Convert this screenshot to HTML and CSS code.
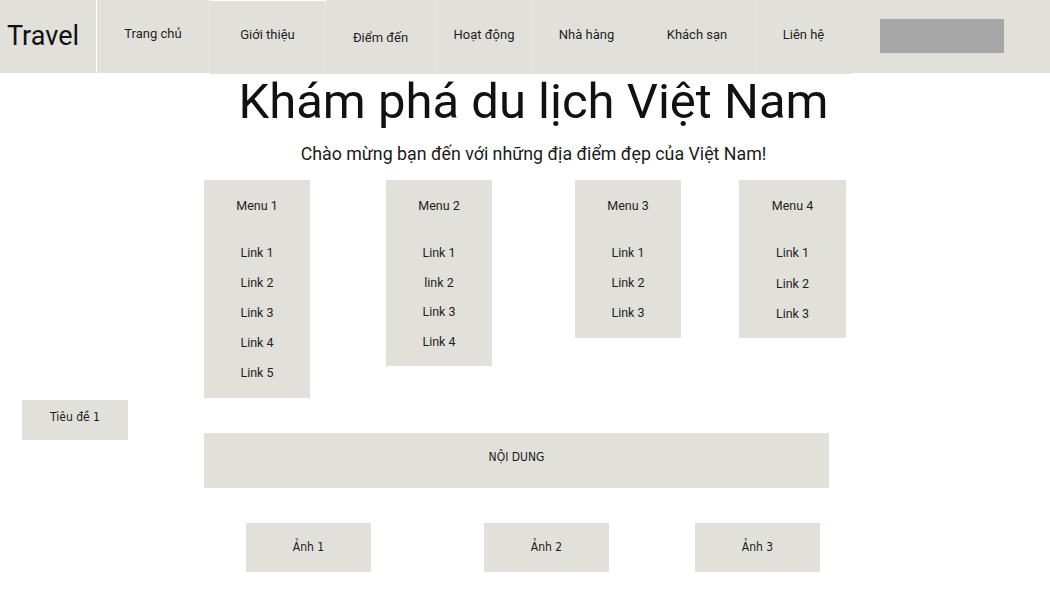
FILE: index.html
```html
<!DOCTYPE html>
<html lang="vi">
<head>
<meta charset="utf-8">
<title>Travel</title>
<link rel="stylesheet" href="styles.css">
</head>
<body>
<nav class="nav">
  <div class="nav-item brand">Travel</div>
  <div class="nav-item w-home">Trang chủ</div>
  <div class="nav-item w-about shift">Giới thiệu</div>
  <div class="nav-item w-dest low">Điểm đến</div>
  <div class="nav-item w-act">Hoạt động</div>
  <div class="nav-item w-rest">Nhà hàng</div>
  <div class="nav-item w-hotel">Khách sạn</div>
  <div class="nav-item w-contact">Liên hệ</div>
  <div class="nav-item search-cell"><div class="search"></div></div>
</nav>

<header class="hero">
  <h1 class="title">Khám phá du lịch Việt Nam</h1>
  <p class="subtitle">Chào mừng bạn đến với những địa điểm đẹp của Việt Nam!</p>
</header>

<section class="menus">
  <div class="menu m1">
    <div class="menu-head">Menu 1</div>
    <div class="menu-link">Link 1</div>
    <div class="menu-link">Link 2</div>
    <div class="menu-link">Link 3</div>
    <div class="menu-link">Link 4</div>
    <div class="menu-link">Link 5</div>
  </div>
  <div class="menu m2 tight">
    <div class="menu-head">Menu 2</div>
    <div class="menu-link">Link 1</div>
    <div class="menu-link">link 2</div>
    <div class="menu-link">Link 3</div>
    <div class="menu-link">Link 4</div>
  </div>
  <div class="menu m3">
    <div class="menu-head">Menu 3</div>
    <div class="menu-link">Link 1</div>
    <div class="menu-link">Link 2</div>
    <div class="menu-link">Link 3</div>
  </div>
  <div class="menu m4">
    <div class="menu-head">Menu 4</div>
    <div class="menu-link">Link 1</div>
    <div class="menu-link">Link 2</div>
    <div class="menu-link">Link 3</div>
  </div>
</section>

<section class="content-row">
  <div class="box side-title">Tiêu đề 1</div>
  <div class="box content">NỘI DUNG</div>
</section>

<section class="photos">
  <div class="box photo p1">Ảnh 1</div>
  <div class="box photo p2">Ảnh 2</div>
  <div class="box photo p3">Ảnh 3</div>
</section>
</body>
</html>
```

FILE: styles.css
```css
* { box-sizing: border-box; }

body {
  margin: 0;
  background: #ffffff;
  color: #1f1f1f;
  font-family: Roboto, "Liberation Sans", sans-serif;
  width: 1050px;
  height: 600px;
  overflow: hidden;
}

/* NAV */
.nav {
  display: flex;
  height: 74px;
  background: #ffffff;
}
.nav-item {
  background: #e2e0da;
  height: 73px;
  display: flex;
  align-items: center;
  justify-content: center;
  font-size: 13px;
  padding-bottom: 6px;
  border-right: 1px solid #e8e7e2;
}
.brand {
  width: 97px;
  font-size: 27px;
  font-weight: 400;
  color: #111;
  padding-bottom: 2px;
  justify-content: flex-start;
  padding-left: 7px;
  border-right: 1px solid #ffffff;
}
.w-home { width: 113px; }
.w-about { width: 116px; margin-top: 1px; }
.w-dest { width: 110px; height: 74px; padding-bottom: 0; padding-top: 1px; }
.w-act { width: 97px; height: 74px; }
.w-rest { width: 107px; height: 74px; border-right: none; }
.w-hotel { width: 115px; height: 74px; }
.w-contact { width: 97px; height: 74px; border-right: none; }
.search-cell {
  flex: 1;
  justify-content: flex-start;
  padding: 0 0 0 28px;
  border-right: none;
}
.search {
  width: 124px;
  height: 34px;
  background: #a6a6a6;
  margin-top: -1px;
}

/* HERO */
.hero { text-align: center; padding-left: 17px; }
.title {
  margin: 0;
  font-size: 49px;
  font-weight: 400;
  line-height: 56px;
  color: #111;
}
.subtitle {
  margin: 13px 0 0;
  font-size: 17.8px;
  line-height: 22px;
  color: #1a1a1a;
}

/* MENUS */
.menus {
  display: flex;
  align-items: flex-start;
  margin-top: 15px;
  padding-left: 204px;
}
.menu {
  width: 106px;
  background: #e2e0da;
  padding-bottom: 10px;
  font-size: 12.5px;
  text-align: center;
}
.m2 { margin-left: 76px; }
.m3 { margin-left: 83px; }
.m4 { margin-left: 58px; width: 107px; }
.menu-head {
  height: 52px;
  line-height: 52px;
  margin-bottom: 6px;
}
.menu-link {
  height: 30px;
  line-height: 30px;
}
.tight .menu-link { height: 29.5px; line-height: 29px; }
.m4 .menu-link:nth-child(n+3) { line-height: 31px; }

/* BOXES */
.box {
  background: #e2e0da;
  display: flex;
  align-items: center;
  justify-content: center;
  font-family: "DejaVu Sans Condensed", "DejaVu Sans", sans-serif;
  font-stretch: condensed;
  font-size: 12px;
  color: #1a1a1a;
}

.content-row {
  display: flex;
  align-items: flex-start;
  margin-top: 2px;
}
.side-title {
  width: 106px;
  height: 40px;
  margin-left: 22px;
  padding-bottom: 7px;
}
.content {
  width: 625px;
  height: 55px;
  margin-left: 76px;
  margin-top: 33px;
  padding-bottom: 8px;
}

.photos {
  display: flex;
  margin-top: 35px;
  padding-left: 246px;
}
.photo {
  width: 125px;
  height: 49px;
  padding-bottom: 2px;
}
.p2 { margin-left: 113px; }
.p3 { margin-left: 86px; }
```
